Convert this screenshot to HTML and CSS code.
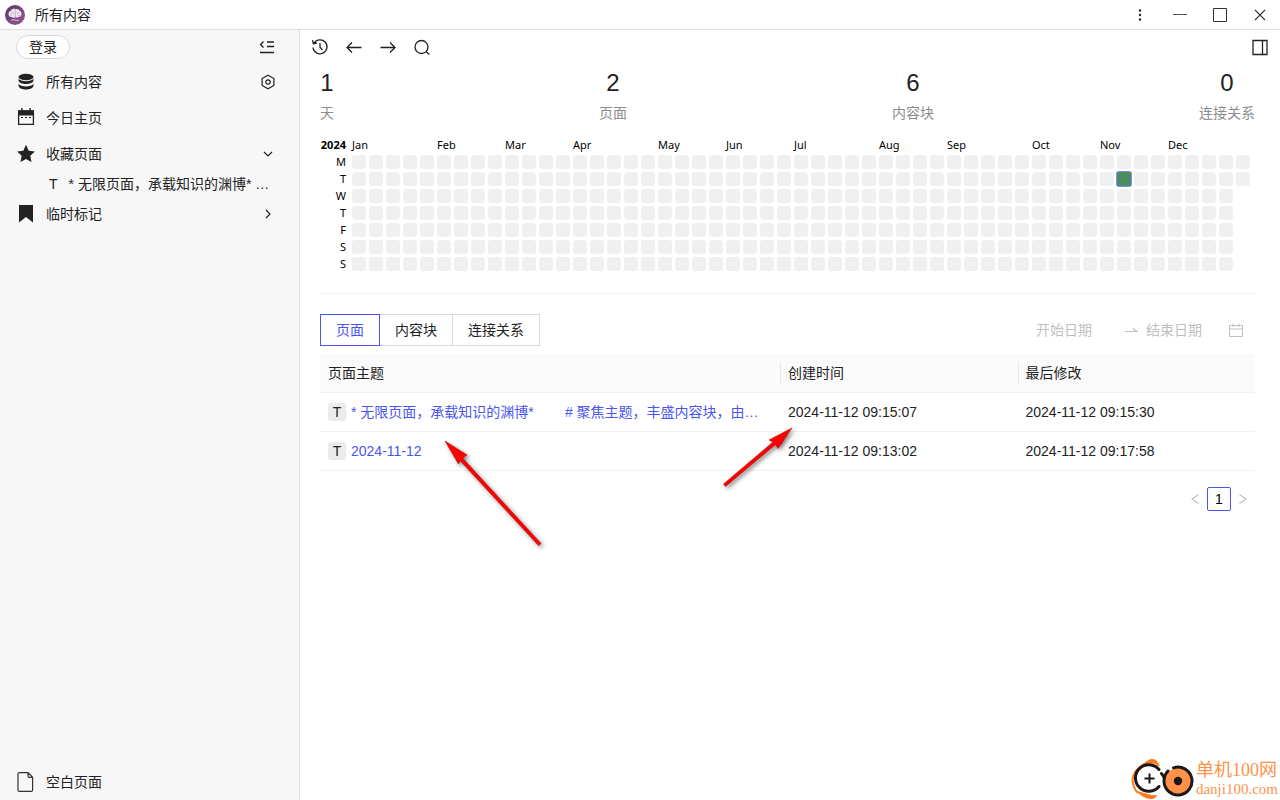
FILE: index.html
```html
<!DOCTYPE html>
<html lang="zh-CN">
<head>
<meta charset="utf-8">
<title>所有内容</title>
<link rel="stylesheet" href="styles.css">
</head>
<body>
<div class="app">
  <header class="titlebar">
    <svg class="app-logo" width="20" height="20" viewBox="0 0 20 20">
      <defs><linearGradient id="logo" x1="0" y1="0" x2="1" y2="1"><stop offset="0" stop-color="#4c3a62"/><stop offset="1" stop-color="#a0569a"/></linearGradient></defs>
      <circle cx="10" cy="10" r="10" fill="url(#logo)"/>
      <path d="M3.500 9.200C3.300 7 4.800 5.600 6.200 5.400 7.200 3.700 9 3.500 10.200 4.200 12 3.400 14 4.300 14.300 5.500 16 6 16.900 7.500 16.300 9.200 16.600 11 15 12 13.700 11.700 12.500 12.800 11 12.700 10.200 12.200 9 13 7.500 12.800 6.900 11.900 5 12.300 3.500 11 3.500 9.200Z" fill="#eee6f0"/>
      <path d="M10.200 4.500V12M6 7.500Q8 7 8 9M14 7.500Q12 7 12.300 9M5 10H7M13 10.500H15" fill="none" stroke="#b79abb" stroke-width=".7"/>
      <path d="M6 15.500Q8 14 10 15T14 15" fill="none" stroke="#ddc8df"/>
    </svg>
    <span class="title">所有内容</span>
    <div class="window-controls">
      <button aria-label="更多"><svg width="16" height="16" viewBox="0 0 16 16" fill="#222"><circle cx="8" cy="3.500" r="1.200"/><circle cx="8" cy="8" r="1.200"/><circle cx="8" cy="12.500" r="1.200"/></svg></button>
      <button aria-label="最小化"><svg width="16" height="16" viewBox="0 0 16 16" stroke="#555"><path d="M1 7.500H15"/></svg></button>
      <button aria-label="最大化"><svg width="16" height="16" viewBox="0 0 16 16" fill="none" stroke="#333"><path d="M1.500 1.500H14.500V14.500H1.500Z"/></svg></button>
      <button aria-label="关闭"><svg width="16" height="16" viewBox="0 0 16 16" stroke="#333" stroke-width="1.100"><path d="M3 3L13 13M13 3L3 13"/></svg></button>
    </div>
  </header>

  <aside class="sidebar">
    <div class="side-top">
      <button class="login">登录</button>
      <button class="icon-btn" aria-label="收起侧栏"><svg width="16" height="16" viewBox="0 0 16 16" fill="none" stroke="#222" stroke-width="1.300"><path d="M4.500 2.500L1.500 5.500 4.500 8.500M8 3H15M8 7.500H15M1 13.500H15"/></svg></button>
    </div>
    <nav class="side-nav">
      <a class="nav-row" href="#all">
        <svg width="20" height="20" viewBox="0 0 20 20" fill="#222"><ellipse cx="10" cy="5" rx="7.500" ry="3.200"/><path d="M2.500 6.800C4.500 10 15.500 10 17.500 6.800V8.700C16 13 4 13 2.500 8.700Z"/><path d="M2.500 12C4.500 15.200 15.500 15.200 17.500 12V14C16 18.700 4 18.700 2.500 14Z"/></svg>
        <span>所有内容</span>
        <svg class="trail" width="16" height="16" viewBox="0 0 16 16" fill="none" stroke="#222" stroke-width="1.200"><path d="M8 1.200L13.900 4.500V11.500L8 14.800 2.100 11.500V4.500Z"/><circle cx="8" cy="8" r="2.200"/></svg>
      </a>
      <a class="nav-row" href="#today">
        <svg width="20" height="20" viewBox="0 0 20 20"><path d="M2.600 3H17.400V16.400H2.600Z" fill="none" stroke="#222" stroke-width="1.300"/><path d="M2 2.500H18V7.500H2ZM5.200 0H6.600V3H5.200ZM13.400 0H14.800V3H13.400Z" fill="#222"/><path d="M5 9.500H7M9 9.500H11M13 9.500H15" stroke="#222" stroke-width="1.200"/></svg>
        <span>今日主页</span>
      </a>
      <a class="nav-row" href="#favorites">
        <svg width="20" height="20" viewBox="0 0 20 20" fill="#222"><path d="M10 .8L12.700 6.800 18.900 7.500 14.300 11.800 15.500 18 10 15 4.500 18 5.700 11.800 1.100 7.500 7.300 6.800Z"/></svg>
        <span>收藏页面</span>
        <svg class="trail" width="16" height="16" viewBox="0 0 16 16" fill="none" stroke="#222" stroke-width="1.200"><path d="M4 6L8 10 12 6"/></svg>
      </a>
      <a class="sub-row" href="#page"><span class="sub-mark">T</span><span class="sub-text">* 无限页面，承载知识的渊博* …</span></a>
      <a class="nav-row" href="#marks">
        <svg width="20" height="20" viewBox="0 0 20 20" fill="#222"><path d="M3 1H17V18.500L10 13 3 18.500Z"/></svg>
        <span>临时标记</span>
        <svg class="trail" width="16" height="16" viewBox="0 0 16 16" fill="none" stroke="#222" stroke-width="1.200"><path d="M6 4L10 8 6 12"/></svg>
      </a>
    </nav>
    <a class="nav-row side-bottom" href="#blank">
      <svg width="20" height="20" viewBox="0 0 20 20" fill="none" stroke="#333" stroke-width="1.200"><path d="M3.500 .7H12L16.600 5.300V18Q16.600 19.400 15.200 19.400H3.500Q2 19.400 2 18V2Q2 .7 3.500 .7ZM12 .7V4Q12 5.300 13.200 5.300H16.600"/></svg>
      <span>空白页面</span>
    </a>
  </aside>

  <main class="main">
    <div class="toolbar">
      <button class="icon-btn" aria-label="历史"><svg width="18" height="18" viewBox="0 0 18 18" fill="none" stroke="#222" stroke-width="1.300"><path d="M2.800 5.500A7 7 0 1 1 2 9.500M1.500 2.200L2.300 5.700 5.800 5M9 5V9.300L11.500 12"/></svg></button>
      <button class="icon-btn" aria-label="后退"><svg width="18" height="18" viewBox="0 0 18 18" fill="none" stroke="#222" stroke-width="1.300"><path d="M16.500 9.500H2M7 4.500L2 9.500 7 14.500"/></svg></button>
      <button class="icon-btn" aria-label="前进"><svg width="18" height="18" viewBox="0 0 18 18" fill="none" stroke="#222" stroke-width="1.300"><path d="M1.500 9.500H16M11 4.500L16 9.500 11 14.500"/></svg></button>
      <button class="icon-btn" aria-label="搜索"><svg width="18" height="18" viewBox="0 0 18 18" fill="none" stroke="#222" stroke-width="1.300"><circle cx="8.500" cy="9" r="6.500"/><path d="M13.300 13.800L16.300 16.500"/></svg></button>
      <button class="icon-btn toolbar-end" aria-label="右侧栏"><svg width="18" height="18" viewBox="0 0 18 18" fill="none" stroke="#222" stroke-width="1.300"><path d="M2 2.500H16V16.500H2ZM11.500 2.500V16.500"/></svg></button>
    </div>

    <div class="content">
      <section class="stats">
        <div class="stat"><span class="stat-num">1</span><span class="stat-label">天</span></div>
        <div class="stat"><span class="stat-num">2</span><span class="stat-label">页面</span></div>
        <div class="stat"><span class="stat-num">6</span><span class="stat-label">内容块</span></div>
        <div class="stat"><span class="stat-num">0</span><span class="stat-label">连接关系</span></div>
      </section>

      <section class="heatmap">
        <div class="heat-side"><b>2024</b><span>M</span><span>T</span><span>W</span><span>T</span><span>F</span><span>S</span><span>S</span></div>
        <div class="heat-body">
          <div class="heat-months" id="months"></div>
          <div class="heat-grid" id="days"></div>
        </div>
      </section>

      <div class="filters">
        <div class="tabs">
          <button class="tab active">页面</button><button class="tab">内容块</button><button class="tab">连接关系</button>
        </div>
        <div class="range">
          <input type="text" placeholder="开始日期" aria-label="开始日期">
          <svg class="range-arrow" width="19" height="14" viewBox="0 0 19 14" fill="none" stroke="#bfbfbf" stroke-width="1.200"><path d="M6 8.500H18L14 5.500"/></svg>
          <input type="text" placeholder="结束日期" aria-label="结束日期">
          <svg width="14" height="14" viewBox="0 0 14 14" fill="none" stroke="#bfbfbf"><path d="M.5 2.500H13.500V13.500H.5ZM.5 6H13.500M4 .5V4M10 .5V4"/></svg>
        </div>
      </div>

      <table class="pages">
        <thead><tr><th class="col-topic">页面主题</th><th>创建时间</th><th>最后修改</th></tr></thead>
        <tbody>
          <tr><td><div class="topic"><span class="mark">T</span><a href="#p1">* 无限页面，承载知识的渊博*        # 聚焦主题，丰盛内容块，由…</a></div></td><td>2024-11-12 09:15:07</td><td>2024-11-12 09:15:30</td></tr>
          <tr><td><div class="topic"><span class="mark">T</span><a href="#p2">2024-11-12</a></div></td><td>2024-11-12 09:13:02</td><td>2024-11-12 09:17:58</td></tr>
        </tbody>
      </table>

      <div class="pager">
        <button aria-label="上一页"><svg width="12" height="12" viewBox="0 0 12 12" fill="none" stroke="#bfbfbf" stroke-width="1.100"><path d="M9.500 1.500L3 6 9.500 10.500"/></svg></button>
        <button class="current">1</button>
        <button aria-label="下一页"><svg width="12" height="12" viewBox="0 0 12 12" fill="none" stroke="#bfbfbf" stroke-width="1.100"><path d="M2.500 1.500L9 6 2.500 10.500"/></svg></button>
      </div>
    </div>
  </main>
</div>

<svg class="pointer pointer-topic" width="110" height="120" viewBox="0 0 110 120">
  <path d="M5 1L27 15 22.500 18 101 103.500 98.500 105.500 20 20.500 18.500 24Z" fill="#f00" stroke="#a00" stroke-width=".5"/>
</svg>
<svg class="pointer pointer-time" width="90" height="80" viewBox="0 0 90 80">
  <path d="M72 8L58 28.500 55.500 24.500 5.500 66.500 3.500 64 53 22 49 20Z" fill="#f00" stroke="#a00" stroke-width=".5"/>
</svg>
<div class="brand">
  <svg width="64" height="42" viewBox="0 0 64 42" fill="none">
    <path d="M28 8Q26 1 20 2.500Q14 6 10 9Q3 14 2.500 22Q3 29 7 34Q17 37 25 39" stroke="#ff7a1a" stroke-width="2"/>
    <path d="M13 7Q19-1 26 2L30 8Q22 3 13 7ZM7 33Q13 41 21 41Q26 41 27 37Q17 38 7 33Z" fill="#ff7a1a"/>
    <path d="M29 11.500A13.300 13.300 0 1 0 29 28.500" stroke="#1c1718" stroke-width="3" stroke-linecap="round"/>
    <path d="M19.500 15.500V25.500M14.500 20.500H24.500" stroke="#1c1718" stroke-width="2"/>
    <circle cx="48" cy="23" r="13" fill="#ff9248"/>
    <path d="M43.500 9.800A14 14 0 1 1 34 23Q34 17 38 13M31.500 15.500L34.500 20" stroke="#1c1718" stroke-width="3" stroke-linecap="round"/>
    <circle cx="48" cy="23" r="4.200" fill="#1c1718"/>
  </svg>
  <div class="brand-text"><span class="brand-name">单机100网</span><span class="brand-url">danji100.com</span></div>
</div>
<script src="heatmap.js"></script>
</body>
</html>
```
FILE: styles.css
```css
* { box-sizing: border-box; }
body { margin: 0; font-family: "Liberation Sans", "Noto Sans CJK SC", sans-serif; font-size: 14px; line-height: 22px; color: #222; background: #fff; }
a { color: inherit; text-decoration: none; }
button { font: inherit; color: inherit; background: none; border: 0; padding: 0; }
svg { display: block; flex: none; }

.app { display: grid; grid-template: 30px 1fr / 300px 1fr; height: 100vh; }
.titlebar { grid-column: 1 / 3; display: flex; align-items: center; gap: 10px; padding-left: 5px; border-bottom: 1px solid #e0e0e0; }
.window-controls { display: flex; margin-left: auto; }
.window-controls button { width: 40px; display: flex; justify-content: center; }

.sidebar { display: flex; flex-direction: column; background: #f7f7f7; border-right: 1px solid #e0e0e0; min-width: 0; }
.side-top { display: flex; align-items: center; justify-content: space-between; height: 34px; padding: 0 24px 0 16px; }
.login { height: 24px; padding: 0 12px; line-height: 22px; border: 1px solid #d9d9d9; border-radius: 12px; background: #fff; }
.nav-row { display: flex; align-items: center; gap: 10px; height: 36px; padding: 0 23px 0 16px; }
.trail { margin-left: auto; }
.sub-row { display: flex; align-items: center; gap: 11px; height: 24px; padding: 0 24px 0 49px; white-space: nowrap; }
.side-bottom { margin-top: auto; }

.main { display: flex; flex-direction: column; min-width: 0; }
.toolbar { display: flex; align-items: center; gap: 16px; height: 34px; padding: 0 11px; }
.toolbar-end { margin-left: auto; }
.content { padding: 0 25px 0 20px; }
.stats { display: flex; justify-content: space-between; }
.stat { display: flex; flex-direction: column; align-items: center; }
.stat-num { font-size: 24px; line-height: 38px; }
.stat-label { color: #8c8c8c; }

.heatmap { display: flex; gap: 6px; margin-top: 14px; padding-bottom: 22px; border-bottom: 1px solid #f0f0f0; font: 11px/14px "Noto Sans", sans-serif; color: #000; }
.heat-side { display: grid; grid-auto-rows: 14px; gap: 3px; width: 26px; text-align: right; justify-items: end; }
.heat-months { display: grid; grid-template-columns: repeat(53, 14px); column-gap: 3px; height: 14px; margin-bottom: 3px; }
.heat-months span { white-space: nowrap; width: 14px; }
.heat-grid { display: grid; grid-template-rows: repeat(7, 14px); grid-auto-columns: 14px; grid-auto-flow: column; gap: 3px; }
.day { border-radius: 3px; background: #eff0f2; }
.day.today { border-radius: 2px; background: #4c8d60; box-shadow: 0 0 0 1px #7f8cf5; }

.filters { display: flex; justify-content: space-between; margin: 20px 0 8px; }
.tabs { display: flex; }
.tab { height: 32px; padding: 0 15px; border: 1px solid #d9d9d9; background: #fff; }
.tab + .tab { margin-left: -1px; }
.tab.active { position: relative; border-color: #4a55f0; color: #4a55f0; }
.range { display: flex; align-items: center; gap: 8px; padding-right: 12px; }
.range input { width: 75px; border: 0; padding: 0; font: inherit; background: none; }
.range input::placeholder { color: #bfbfbf; }

.pages { width: 100%; table-layout: fixed; border-collapse: separate; border-spacing: 0; }
.pages th, .pages td { padding: 8px; text-align: left; font-weight: 400; border-bottom: 1px solid #f0f0f0; }
.pages th { background: #fafafa; }
.pages th + th { background: linear-gradient(#e8e8e8, #e8e8e8) 0 8px / 1px 22px no-repeat #fafafa; }
.col-topic { width: 460px; }
.topic { display: flex; align-items: center; gap: 5px; color: #4a55f0; white-space: pre; }
.mark { width: 18px; height: 18px; line-height: 18px; text-align: center; border-radius: 3px; background: #ebebeb; color: #222; }

.pager { display: flex; justify-content: flex-end; margin-top: 16px; }
.pager button { width: 24px; height: 24px; display: flex; align-items: center; justify-content: center; }
.pager .current { border: 1px solid #4a55f0; border-radius: 2px; color: #000; }

.pointer { position: absolute; pointer-events: none; filter: drop-shadow(2px 2px 2px rgba(0, 0, 0, .5)); }
.pointer-topic { left: 440px; top: 440px; }
.pointer-time { left: 720px; top: 420px; }
.brand { position: absolute; right: 2px; bottom: 0; display: flex; gap: 2px; align-items: center; }
.brand-text { display: flex; flex-direction: column; font-family: "Liberation Serif", "Noto Sans CJK SC", serif; color: #ff9248; white-space: nowrap; }
.brand-name { font-size: 18px; line-height: 20px; }
.brand-url { font-size: 15px; line-height: 18px; }
```
FILE: heatmap.js
```js
const months = { Jan: 0, Feb: 5, Mar: 9, Apr: 13, May: 18, Jun: 22, Jul: 26, Aug: 31, Sep: 35, Oct: 40, Nov: 44, Dec: 48 };
const monthRow = document.getElementById("months");
for (const [name, week] of Object.entries(months)) {
  const label = document.createElement("span");
  label.textContent = name;
  label.style.gridColumn = week + 1;
  monthRow.append(label);
}

const start = Date.UTC(2024, 0, 1);
const active = (Date.UTC(2024, 10, 12) - start) / 86400000;
const grid = document.getElementById("days");
for (let i = 0; i < 366; i++) {
  const day = document.createElement("i");
  day.className = i === active ? "day today" : "day";
  grid.append(day);
}
```
